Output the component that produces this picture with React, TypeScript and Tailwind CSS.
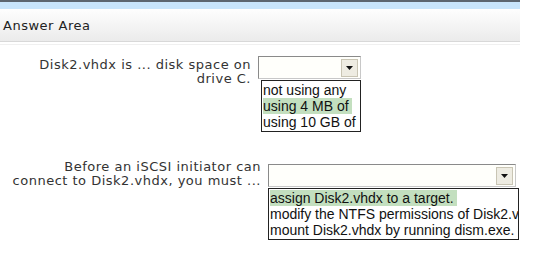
import React from "react"

const font = { fontFamily: '"DejaVu Sans", Verdana, sans-serif' }
const listFont = { fontFamily: '"Liberation Sans", Arial, sans-serif' }

const Arrow = () => (
  <div className="flex h-[18px] w-[17px] items-center justify-center border border-[#c9c5b4] bg-[#eeece2]">
    <svg width="7" height="4" viewBox="0 0 7 4">
      <path d="M0 0h7L3.5 4z" fill="#111" />
    </svg>
  </div>
)

const Select = ({ width }: { width: number }) => (
  <div
    className="flex h-[23px] items-center justify-end border border-t-[#8a8a8a] border-l-[#8a8a8a] border-r-[#c8c8c8] border-b-[#c8c8c8] bg-[#fffffb] pr-[2px]"
    style={{ width }}
  >
    <Arrow />
  </div>
)

const Options = ({
  items,
  selected,
  width,
  offset,
}: {
  items: string[]
  selected: number
  width: number
  offset: number
}) => (
  <div
    className="mt-[1px] overflow-hidden whitespace-nowrap border border-[#222] bg-white py-[1px] text-[14px] leading-[16px] text-[#111]"
    style={{ ...listFont, width, marginLeft: offset }}
  >
    {items.map((it, i) => (
      <div key={it} className="px-[1px]">
        <span className={i === selected ? "inline-block bg-[#c3dfbf] pr-[3px]" : "inline-block"}>{it}</span>
      </div>
    ))}
  </div>
)

export default function App() {
  return (
    <div className="h-[261px] w-[537px] bg-white text-[#333]" style={font}>
      <div className="w-[520px]">
        <div className="h-[2px] bg-[#5c6670]" />
        <div className="h-[7px] bg-[#c8e5fc]" />
        <div className="flex h-[32px] items-center bg-gradient-to-b from-[#fefefe] to-[#ebebeb] pl-[3px] pt-[2px] text-[13px] tracking-[0.5px] text-[#222]">
          Answer Area
        </div>
        <div className="h-[1px] bg-[#d8d8d8]" />
        <div className="mt-[2px] h-[1px] bg-[#f0f0f0]" />
      </div>

      <div className="mt-[11px] flex items-start">
        <div className="w-[251px] pt-[2px] text-right text-[13px] leading-[14px] tracking-[0.5px]">
          Disk2.vhdx is ... disk space on
          <br />
          drive C.
        </div>
        <div className="ml-[7px] flex flex-col">
          <Select width={103} />
          <Options items={["not using any", "using 4 MB of", "using 10 GB of"]} selected={1} width={100} offset={3} />
        </div>
      </div>

      <div className="mt-[26px] flex items-start">
        <div className="w-[261px] pt-[2px] text-right text-[13px] leading-[14px] tracking-[0.5px]">
          Before an iSCSI initiator can
          <br />
          connect to Disk2.vhdx, you must ...
        </div>
        <div className="ml-[7px] mt-[6px] flex flex-col">
          <Select width={248} />
          <Options
            items={[
              "assign Disk2.vhdx to a target.",
              "modify the NTFS permissions of Disk2.vhdx",
              "mount Disk2.vhdx by running dism.exe.",
            ]}
            selected={0}
            width={251}
            offset={0}
          />
        </div>
      </div>
    </div>
  )
}
